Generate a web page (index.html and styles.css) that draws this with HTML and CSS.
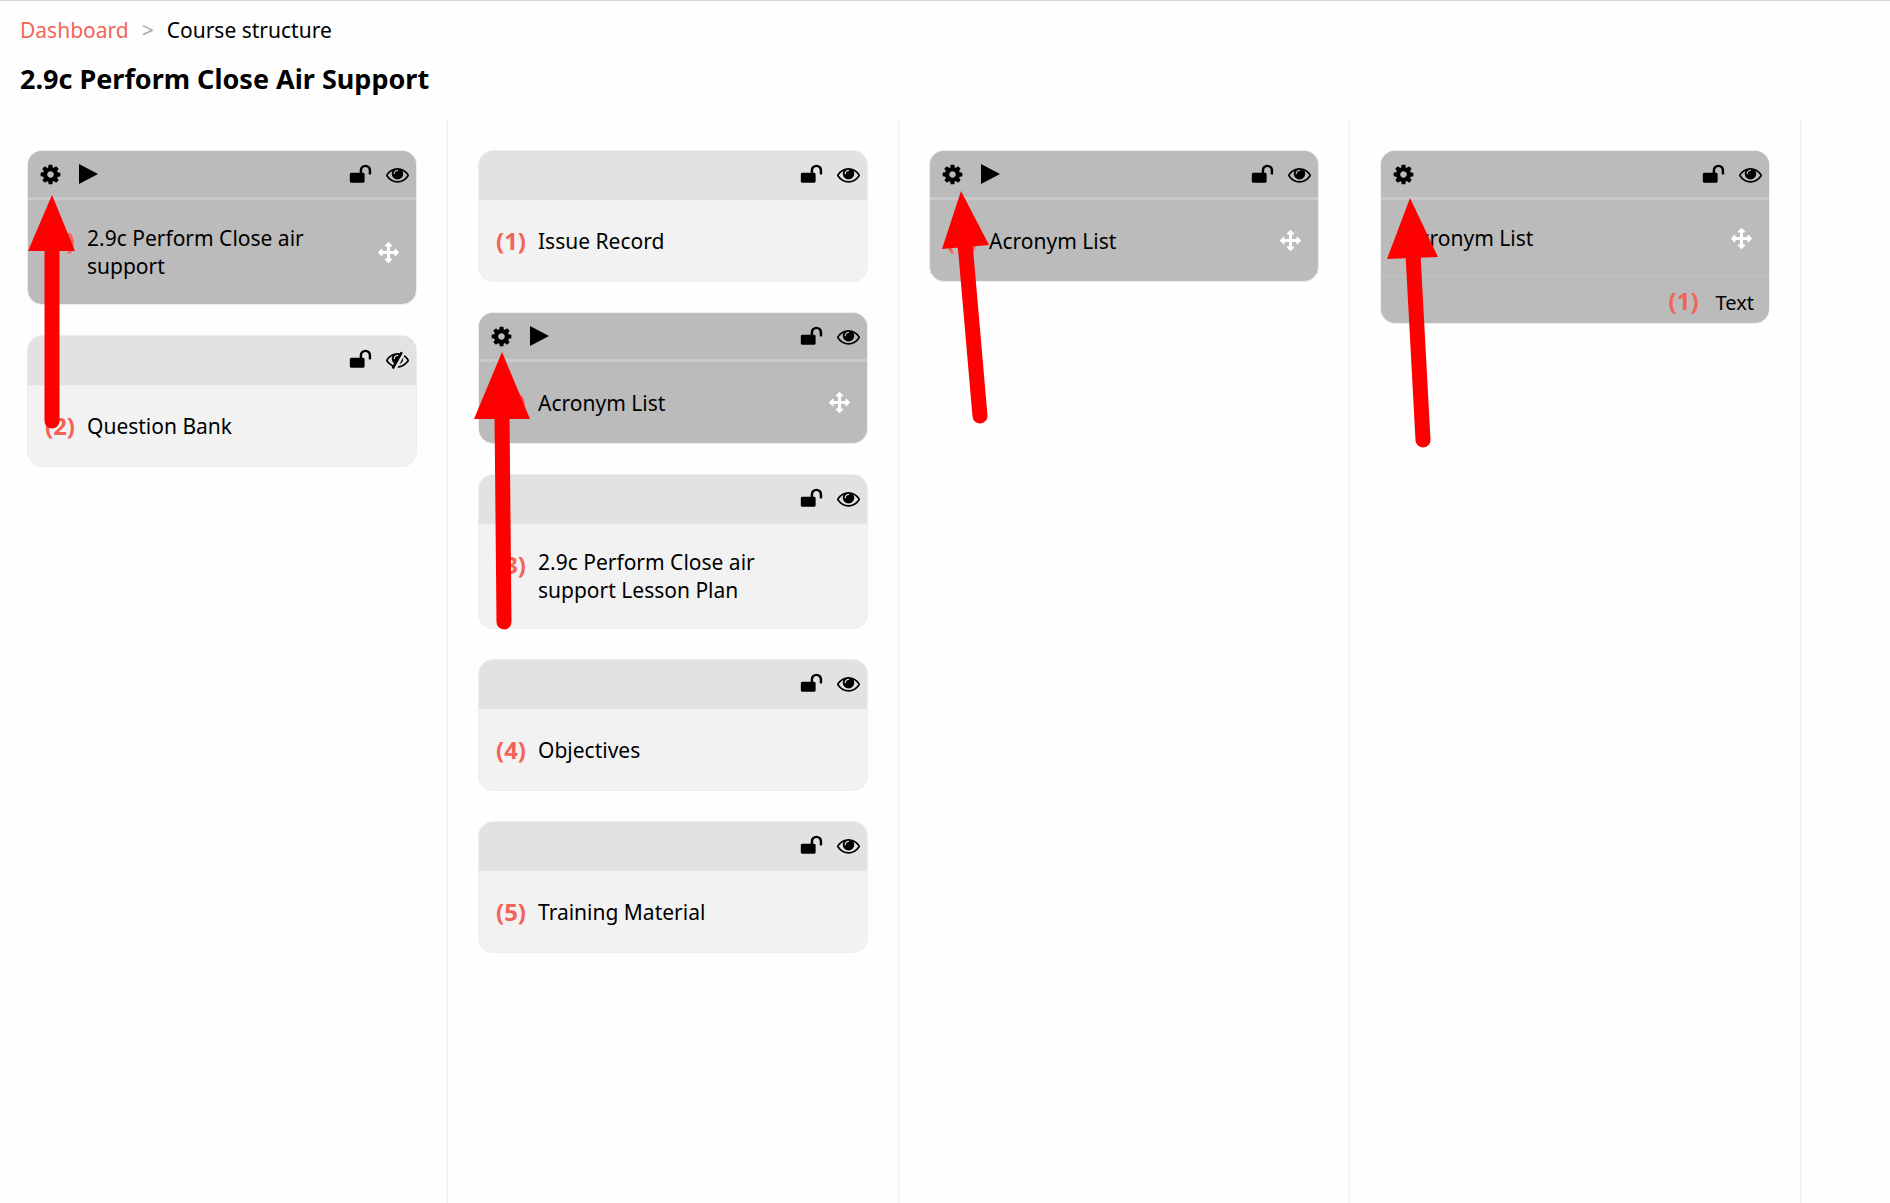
FILE: index.html
```html
<!DOCTYPE html>
<html lang="en">
  <head>
    <meta charset="UTF-8" />
    <meta name="viewport" content="width=device-width, initial-scale=1.0" />
    <title>Course structure</title>
    <link rel="stylesheet" href="styles.css">
  </head>

  <body>
    <svg class="sprite" aria-hidden="true">
      <symbol id="cog" viewBox="0 0 1792 1792">
        <path d="M1152 896q0-106-75-181t-181-75-181 75-75 181 75 181 181 75 181-75 75-181zm512-109v222q0 12-8 23t-20 13l-185 28q-19 54-39 91 35 50 107 138 10 12 10 25t-9 23q-27 37-99 108t-94 71q-12 0-26-9l-138-108q-44 23-91 38-16 136-29 186-7 28-36 28h-222q-14 0-24.500-8.500t-11.500-21.500l-28-184q-49-16-90-37l-141 107q-10 9-25 9-14 0-25-11-126-114-165-168-7-10-7-23 0-12 8-23 15-21 51-66.500t54-70.500q-27-50-41-99l-183-27q-13-2-21-12.500t-8-23.500v-222q0-12 8-23t19-13l186-28q14-46 39-92-40-57-107-138-10-12-10-24 0-10 9-23 26-36 98.500-107.500t94.500-71.500q13 0 26 10l138 107q44-23 91-38 16-136 29-186 7-28 36-28h222q14 0 24.500 8.500t11.500 21.500l28 184q49 16 90 37l142-107q9-9 24-9 13 0 25 10 129 119 165 170 7 8 7 22 0 12-8 23-15 21-51 66.500t-54 70.500q26 50 41 98l183 28q13 2 21 12.500t8 23.500z"/>
      </symbol>
      <symbol id="play" viewBox="0 0 19 20">
        <path d="M0 0L19 10L0 20z"/>
      </symbol>
      <symbol id="unlock" viewBox="0 0 1792 1792">
        <path d="M1728 576v256q0 26-19 45t-45 19h-64q-26 0-45-19t-19-45v-256q0-106-75-181t-181-75-181 75-75 181v192h96q40 0 68 28t28 68v576q0 40-28 68t-68 28h-960q-40 0-68-28t-28-68v-576q0-40 28-68t68-28h672v-192q0-185 131.500-316.500t316.500-131.500 316.500 131.500 131.500 316.500z"/>
      </symbol>
      <symbol id="eye" viewBox="0 0 1792 1792">
        <path d="M1664 960q-152-236-381-353 61 104 61 225 0 185-131.500 316.500t-316.500 131.500-316.500-131.500-131.500-316.500q0-121 61-225-229 117-381 353 133 205 333.500 326.500t434.500 121.500 434.500-121.500 333.500-326.500zm-720-384q0-20-14-34t-34-14q-125 0-214.500 89.500t-89.500 214.500q0 20 14 34t34 14 34-14 14-34q0-86 61-147t147-61q20 0 34-14t14-34zm848 384q0 34-20 69-140 230-376.500 368.500t-499.500 138.500-499.500-139-376.500-368q-20-35-20-69t20-69q140-229 376.500-368t499.500-139 499.500 139 376.500 368q20 35 20 69z"/>
      </symbol>
      <symbol id="eye-slash" viewBox="0 0 1792 1792">
        <path d="M555 1335l78-141q-87-63-136-159t-49-203q0-121 61-225-229 117-381 353 167 258 427 375zm389-759q0-20-14-34t-34-14q-125 0-214.500 89.500t-89.500 214.500q0 20 14 34t34 14 34-14 14-34q0-86 61-147t147-61q20 0 34-14t14-34zm363-191q0 7-1 9-106 189-316 567t-315 566l-49 89q-10 16-28 16-12 0-134-70-16-10-16-28 0-12 44-87-143-65-263.500-173t-208.500-245q-20-31-20-69t20-69q153-235 380-371t496-136q89 0 180 17l54-97q10-16 28-16 5 0 18 6t31 15.500 33 18.500 31.500 18.500 19.500 11.500q16 10 16 27zm37 447q0 139-79 253.500t-209 164.500l280-502q8 45 8 84zm448 128q0 35-20 69-39 64-109 145-150 172-347.500 267t-419.500 95l74-132q212-18 392.500-137t301.500-307q-115-179-282-294l63-112q95 64 182.500 153t144.500 184q20 34 20 69z"/>
      </symbol>
      <symbol id="move" viewBox="0 0 1792 1792">
        <path d="M1792 896q0 26-19 45l-256 256q-19 19-45 19t-45-19-19-45v-128h-384v384h128q26 0 45 19t19 45-19 45l-256 256q-19 19-45 19t-45-19l-256-256q-19-19-19-45t19-45 45-19h128v-384h-384v128q0 26-19 45t-45 19-45-19l-256-256q-19-19-19-45t19-45l256-256q19-19 45-19t45 19 19 45v128h384v-384h-128q-26 0-45-19t-19-45 19-45l256-256q19-19 45-19t45 19l256 256q19 19 19 45t-19 45-45 19h-128v384h384v-128q0-26 19-45t45-19 45 19l256 256q19 19 19 45z"/>
      </symbol>
    </svg>

    <header class="top">
      <nav class="breadcrumb" aria-label="Breadcrumb">
        <a href="#">Dashboard</a>
        <span class="sep">&gt;</span>
        <span>Course structure</span>
      </nav>
      <h1>2.9c Perform Close Air Support</h1>
    </header>

    <main class="columns">
      <section class="column">
        <article class="card active">
          <div class="bar">
            <button aria-label="Settings"><svg class="icon"><use href="#cog"/></svg></button>
            <button class="play" aria-label="Preview"><svg><use href="#play"/></svg></button>
            <button class="lock" aria-label="Lock"><svg class="icon"><use href="#unlock"/></svg></button>
            <button aria-label="Hide"><svg class="icon"><use href="#eye"/></svg></button>
          </div>
          <div class="content">
            <span class="number">(1)</span>
            <span class="name">2.9c Perform Close air support</span>
            <button class="move" aria-label="Move"><svg><use href="#move"/></svg></button>
          </div>
        </article>
        <article class="card">
          <div class="bar">
            <button class="lock" aria-label="Lock"><svg class="icon"><use href="#unlock"/></svg></button>
            <button aria-label="Show"><svg class="icon"><use href="#eye-slash"/></svg></button>
          </div>
          <div class="content">
            <span class="number">(2)</span>
            <span class="name">Question Bank</span>
          </div>
        </article>
      </section>

      <section class="column">
        <article class="card">
          <div class="bar">
            <button class="lock" aria-label="Lock"><svg class="icon"><use href="#unlock"/></svg></button>
            <button aria-label="Hide"><svg class="icon"><use href="#eye"/></svg></button>
          </div>
          <div class="content">
            <span class="number">(1)</span>
            <span class="name">Issue Record</span>
          </div>
        </article>
        <article class="card active">
          <div class="bar">
            <button aria-label="Settings"><svg class="icon"><use href="#cog"/></svg></button>
            <button class="play" aria-label="Preview"><svg><use href="#play"/></svg></button>
            <button class="lock" aria-label="Lock"><svg class="icon"><use href="#unlock"/></svg></button>
            <button aria-label="Hide"><svg class="icon"><use href="#eye"/></svg></button>
          </div>
          <div class="content">
            <span class="number">(2)</span>
            <span class="name">Acronym List</span>
            <button class="move" aria-label="Move"><svg><use href="#move"/></svg></button>
          </div>
        </article>
        <article class="card">
          <div class="bar">
            <button class="lock" aria-label="Lock"><svg class="icon"><use href="#unlock"/></svg></button>
            <button aria-label="Hide"><svg class="icon"><use href="#eye"/></svg></button>
          </div>
          <div class="content">
            <span class="number">(3)</span>
            <span class="name">2.9c Perform Close air support Lesson Plan</span>
          </div>
        </article>
        <article class="card">
          <div class="bar">
            <button class="lock" aria-label="Lock"><svg class="icon"><use href="#unlock"/></svg></button>
            <button aria-label="Hide"><svg class="icon"><use href="#eye"/></svg></button>
          </div>
          <div class="content">
            <span class="number">(4)</span>
            <span class="name">Objectives</span>
          </div>
        </article>
        <article class="card">
          <div class="bar">
            <button class="lock" aria-label="Lock"><svg class="icon"><use href="#unlock"/></svg></button>
            <button aria-label="Hide"><svg class="icon"><use href="#eye"/></svg></button>
          </div>
          <div class="content">
            <span class="number">(5)</span>
            <span class="name">Training Material</span>
          </div>
        </article>
      </section>

      <section class="column">
        <article class="card active">
          <div class="bar">
            <button aria-label="Settings"><svg class="icon"><use href="#cog"/></svg></button>
            <button class="play" aria-label="Preview"><svg><use href="#play"/></svg></button>
            <button class="lock" aria-label="Lock"><svg class="icon"><use href="#unlock"/></svg></button>
            <button aria-label="Hide"><svg class="icon"><use href="#eye"/></svg></button>
          </div>
          <div class="content">
            <span class="number">(1)</span>
            <span class="name">Acronym List</span>
            <button class="move" aria-label="Move"><svg><use href="#move"/></svg></button>
          </div>
        </article>
      </section>

      <section class="column">
        <article class="card active">
          <div class="bar">
            <button aria-label="Settings"><svg class="icon"><use href="#cog"/></svg></button>
            <button class="lock" aria-label="Lock"><svg class="icon"><use href="#unlock"/></svg></button>
            <button aria-label="Hide"><svg class="icon"><use href="#eye"/></svg></button>
          </div>
          <div class="content page">
            <span class="name">Acronym List</span>
            <button class="move" aria-label="Move"><svg><use href="#move"/></svg></button>
          </div>
          <div class="block">
            <span class="number">(1)</span>
            <span>Text</span>
          </div>
        </article>
      </section>
    </main>

    <!-- arrows pointing at the settings buttons -->
    <svg class="arrows" aria-hidden="true">
      <path class="head" d="M52 195L75 251H28z"/>
      <path class="shaft" d="M52 245V421"/>
      <path class="head" d="M502 352L530 419H474z"/>
      <path class="shaft" d="M502 414L504 622"/>
      <path class="head" d="M961 191L989 245L942 249z"/>
      <path class="shaft" d="M965 243L980 416"/>
      <path class="head" d="M1410 198L1438 257L1387 259z"/>
      <path class="shaft" d="M1413 254L1423 440"/>
    </svg>
  </body>

</html>
```

FILE: styles.css
```css
* {
  box-sizing: border-box;
}

body {
  margin: 0;
  min-height: 100vh;
  display: flex;
  flex-direction: column;
  position: relative;
  overflow-x: hidden;
  border-top: 1px solid #d5d5d5;
  background: #fefefe;
  color: #000;
  font-family: "Noto Sans", sans-serif;
  font-size: 21px;
  line-height: 28px;
}

.sprite {
  display: none;
}

.top {
  padding: 15px 20px 23px;
}

.breadcrumb {
  display: flex;
  gap: 13px;
}

.breadcrumb a {
  color: #f26458;
  text-decoration: none;
}

.breadcrumb .sep {
  color: #aaa;
}

h1 {
  margin: 17px 0 0;
  font-size: 27px;
  line-height: 36px;
}

.columns {
  flex: 1;
  display: grid;
  grid-template-columns: repeat(4, 1fr);
  margin-left: -3px;
  padding-right: 89px;
}

.column {
  display: flex;
  flex-direction: column;
  gap: 30px;
  padding: 30px;
  border-right: 1px solid #f0f0f0;
}

.card {
  overflow: hidden;
  border: 1px solid #eee;
  border-radius: 15px;
  background: #f2f2f2;
}

.bar {
  display: flex;
  align-items: center;
  height: 49px;
  padding: 0 7px 3px 11px;
  background: #e2e2e2;
}

button {
  display: flex;
  padding: 0;
  border: none;
  background: none;
  color: inherit;
  cursor: pointer;
}

button svg {
  fill: currentColor;
}

.icon {
  width: 23px;
  height: 23px;
}

.play {
  margin-left: 17px;
}

.play svg {
  width: 19px;
  height: 20px;
}

.lock {
  margin: 0 14px 0 auto;
}

.content {
  display: flex;
  padding: 24px 17px;
}

.number {
  flex: 0 0 42px;
  color: #f26458;
  font-size: 24px;
  font-weight: bold;
  line-height: 33px;
}

.name {
  flex: 1;
  align-self: center;
  padding-right: 60px;
}

.move {
  align-self: center;
  color: #fff;
}

.move svg {
  width: 21px;
  height: 21px;
}

.active,
.active .bar {
  background: #bbb;
}

.active .bar {
  padding-bottom: 0;
  border-bottom: 3px solid #c9c9c9;
}

.active .name {
  padding-right: 40px;
}

.page {
  padding-left: 25px;
}

.block {
  display: flex;
  align-items: baseline;
  justify-content: flex-end;
  padding: 7px 15px 6px;
  border-top: 1px solid #c3c3c3;
  font-size: 20px;
}

.block .number {
  flex-basis: 47px;
}

.arrows {
  position: absolute;
  top: -1px;
  left: 0;
  width: 100%;
  height: 640px;
  pointer-events: none;
}

.head {
  fill: #f00;
}

.shaft {
  fill: none;
  stroke: #f00;
  stroke-width: 15;
  stroke-linecap: round;
}
```
